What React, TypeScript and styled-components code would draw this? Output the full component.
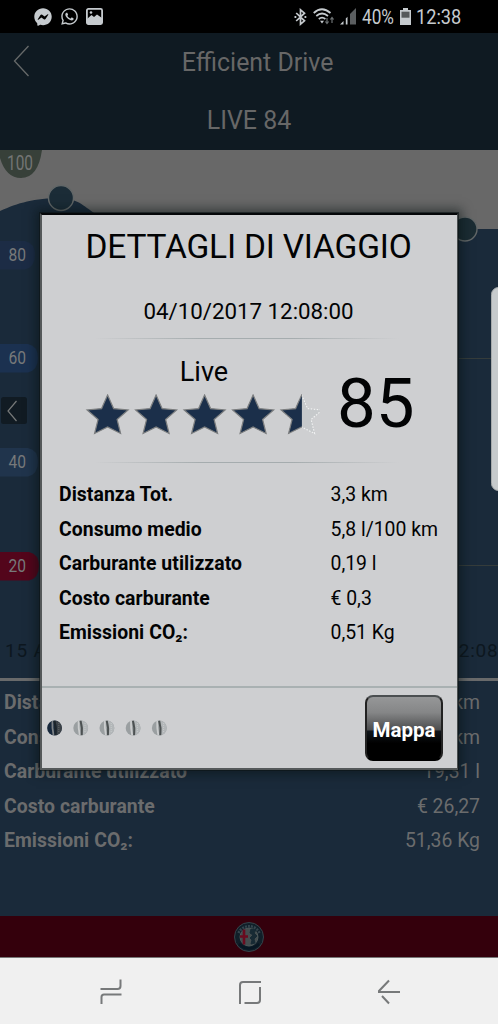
import React from "react";
import styled, { createGlobalStyle } from "styled-components";
import { FaFacebookMessenger, FaWhatsapp } from "react-icons/fa";

const GlobalStyle = createGlobalStyle`
  *, *::before, *::after { box-sizing: border-box; }
  body { margin: 0; background: #000; font-family: Roboto, "Liberation Sans", sans-serif; }
`;

const Phone = styled.div`
  position: relative;
  display: flex;
  flex-direction: column;
  width: 498px;
  height: 1024px;
  overflow: hidden;
`;

const StatusBar = styled.div`
  display: flex;
  justify-content: space-between;
  align-items: center;
  flex: none;
  height: 33px;
  padding: 0 37px 0 34px;
  background: #000;
  color: #c6cbcf;
`;

const IconGroup = styled.div<{ $gap: number }>`
  display: flex;
  align-items: center;
  gap: ${(p) => p.$gap}px;
  svg { display: block; flex: none; }
`;

const StatusText = styled.span<{ $width: number; $scale: number }>`
  width: ${(p) => p.$width}px;
  white-space: nowrap;
  font-size: 20px;
  line-height: 34px;
  transform: scaleX(${(p) => p.$scale});
  transform-origin: left center;
`;

const Header = styled.header`
  display: grid;
  grid-template-rows: 57px 60px;
  flex: none;
  height: 117px;
  background: #0f1a22;
  color: #676767;
`;

const HeaderRow = styled.div`
  display: grid;
  grid-template-columns: 50px 1fr 50px;
  align-items: center;
  padding-top: 2px;
  svg { display: block; margin: 0 0 3px 13px; }
`;

const HeaderTitle = styled.h1<{ $shift?: number }>`
  margin: 0;
  padding-left: ${(p) => p.$shift ?? 0}px;
  font-size: 24.9px;
  font-weight: 400;
  line-height: 54px;
  text-align: center;
  white-space: nowrap;
`;

const ChartArea = styled.div`
  flex: none;
  height: 528px;
  background: #686868;
  svg { display: block; }
`;

const Totals = styled.section`
  flex: 1;
  padding: 5px 18px 0 4px;
  border-top: 3px solid #696a6b;
  background: #1a2a3a;
  color: #6b6c6d;
`;

const TotalRow = styled.div`
  display: flex;
  justify-content: space-between;
  height: 34.6px;
  font-size: 19.4px;
  line-height: 34px;
  white-space: nowrap;
`;

const Label = styled.span`
  font-weight: 700;
  letter-spacing: 0.05px;
`;

const BrandBar = styled.footer`
  display: flex;
  align-items: center;
  justify-content: center;
  flex: none;
  height: 42px;
  background: #34000c;
  border-bottom: 1px solid #777;
  svg { display: block; }
`;

const NavBar = styled.nav`
  display: flex;
  align-items: center;
  justify-content: space-between;
  flex: none;
  height: 66px;
  padding: 2px 97px 0 99px;
  background: #f0f0f0;
  svg { display: block; }
`;

const EdgeHandle = styled.div`
  position: absolute;
  top: 287px;
  right: -8px;
  width: 15px;
  height: 204px;
  border: 1px solid #a6aaab;
  border-radius: 8px;
  background: #c6cacc;
`;

const Dialog = styled.div`
  position: absolute;
  top: 213px;
  left: 40px;
  display: flex;
  flex-direction: column;
  width: 418px;
  height: 557px;
  border: 2px solid #050709;
  border-color: #050709 #4a4f50 #55595a #55595a;
  border-right-width: 1px;
  background: #cecfd1;
  color: #020304;
  box-shadow: 0 0 0 1px rgba(12, 20, 22, 0.6), 0 0 10px 4px rgba(5, 15, 15, 0.5);
`;

const DialogTitle = styled.h2`
  margin: 0;
  padding-right: 2px;
  font-size: 33.5px;
  font-weight: 400;
  letter-spacing: -0.2px;
  line-height: 64px;
  text-align: center;
  white-space: nowrap;
`;

const DateLine = styled.div`
  height: 59px;
  padding-top: 9px;
  padding-right: 2px;
  font-size: 22.3px;
  line-height: 46px;
  text-align: center;
`;

const Rule = styled.div`
  flex: none;
  height: 1px;
  margin: 0 58px 0 52px;
  background: linear-gradient(90deg, transparent, #a5acae 35%, #a5acae 65%, transparent);
`;

const ScoreBlock = styled.div`
  display: flex;
  height: 123px;
  padding-left: 42px;
`;

const Rating = styled.div`
  width: 240px;
  padding-top: 16px;
  svg { display: block; margin-top: 5px; }
`;

const RatingName = styled.div`
  font-size: 27px;
  line-height: 34px;
  text-align: center;
`;

const Score = styled.div`
  padding: 25px 0 0 13px;
  font-size: 69px;
  line-height: 80px;
`;

const Details = styled.div`
  flex: 1;
  padding: 15px 17px 0 17px;
`;

const DetailRow = styled.div`
  display: grid;
  grid-template-columns: 271.5px 1fr;
  height: 34.6px;
  font-size: 19.4px;
  line-height: 34px;
  white-space: nowrap;
`;

const DialogFooter = styled.div`
  display: flex;
  align-items: center;
  justify-content: space-between;
  flex: none;
  height: 82px;
  padding: 0 14px 0 4px;
  border-top: 2px solid #a9b1b2;
  svg { display: block; }
`;

const MapButton = styled.button`
  width: 78px;
  height: 66px;
  padding: 3px 0 0;
  border: 2px solid #4b4f51;
  border-color: #4b4f51 #222 #000 #222;
  border-radius: 8px;
  background: linear-gradient(180deg, #969798 0%, #858687 25%, #4c4d4e 53%, #10151a 55%, #000 75%);
  color: #fff;
  font: 700 20.5px Roboto, sans-serif;
  white-space: nowrap;
`;

const co2 = "Emissioni CO₂:";

const trip = [
  ["Distanza Tot.", "3,3 km"],
  ["Consumo medio", "5,8 l/100 km"],
  ["Carburante utilizzato", "0,19 l"],
  ["Costo carburante", "€ 0,3"],
  [co2, "0,51 Kg"],
];

const totals = [
  ["Distanza Tot.", "351,9 km"],
  ["Consumo medio", "5,5 l/100 km"],
  ["Carburante utilizzato", "19,31 l"],
  ["Costo carburante", "€ 26,27"],
  [co2, "51,36 Kg"],
];

const STAR = "M21 0 L27 13.6 L41.5 15 L30.5 24.5 L34 38.5 L21 32 L8 38.5 L11.5 24.5 L0.5 15 L15 13.6 Z";

const Stars = () => (
  <svg width="236" height="42" viewBox="0 0 236 42">
    <defs>
      <clipPath id="half"><rect x="-2" y="-2" width="23.3" height="44" /></clipPath>
    </defs>
    <g transform="translate(2.6 1)">
      {[0, 1, 2, 3].map((i) => (
        <path key={i} d={STAR} transform={`translate(${i * 48.5} 0)`} fill="#1b2f4a" stroke="#7c7e7f" strokeWidth="1.2" />
      ))}
      <g transform="translate(194 0)">
        <path d={STAR} fill="#c6c9cb" stroke="#f2f3f3" strokeWidth="1.1" strokeDasharray="1.5 1.5" />
        <path d={STAR} fill="#1b2f4a" stroke="#7c7e7f" strokeWidth="1.2" clipPath="url(#half)" />
      </g>
    </g>
  </svg>
);

const PageDots = () => (
  <svg width="124" height="18" viewBox="0 0 124 18">
    <defs>
      <clipPath id="disc"><circle cx="8.5" cy="9" r="7.4" /></clipPath>
    </defs>
    {[0, 1, 2, 3, 4].map((i) => (
      <g key={i} transform={`translate(${i * 26.2} 0)`} clipPath="url(#disc)">
        <rect width="17" height="18" fill={i ? "#9a9fa1" : "#18293d"} />
        <path d="M9 1 H17 V17 H10 Q12 9 9 1" fill={i ? "#b3b7b9" : "#3c4247"} />
        <path d="M6.400 1.5 Q6 9 7.600 16.5" stroke={i ? "#cbcdce" : "#7c8185"} strokeWidth="1.8" fill="none" />
        <path d="M8.300 1.5 Q10.500 9 9.500 16.5" stroke={i ? "#4c5152" : "#1c2429"} strokeWidth="2" fill="none" />
        <path d="M12.8 4 V14" stroke={i ? "#c7cbcc" : "#62686c"} strokeWidth="1" strokeDasharray="1 1" />
      </g>
    ))}
  </svg>
);

const ticks = [
  { value: 80, y: 91, fill: "#1c2c45", w: 35 },
  { value: 60, y: 194, fill: "#1b3150", w: 38 },
  { value: 40, y: 298, fill: "#20344c", w: 38 },
  { value: 20, y: 402, fill: "#53051b", w: 39 },
];

const Chart = () => (
  <svg width="498" height="528" viewBox="0 0 498 528" fontFamily="Roboto, sans-serif">
    <path d="M0 61 C18 53 34 48 61 48 C82 49 86 60 100 66 C210 120 390 79 465 79 H498 V528 H0 Z" fill="#1a2a3a" />
    <path d="M459 208.5 H491 M459 415.5 H498" stroke="#353c3b" strokeWidth="1" />
    <path d="M0 0 H42 Q38 28 21 28 Q6 28 0 8 Z" fill="#374039" />
    <text x="7" y="20" fontSize="19.5" fill="#737574" textLength="26" lengthAdjust="spacingAndGlyphs">100</text>
    {ticks.map((t) => (
      <g key={t.value}>
        <path d={`M0 ${t.y} H${t.w - 10} Q${t.w} ${t.y + 2} ${t.w} ${t.y + 14} Q${t.w} ${t.y + 26} ${t.w - 10} ${t.y + 28.5} H0 Z`} fill={t.fill} />
        <text x="8.5" y={t.y + 20} fontSize="18" fill="#77797a" textLength="17.5" lengthAdjust="spacingAndGlyphs">{t.value}</text>
      </g>
    ))}
    <rect x="1" y="247" width="26" height="27" rx="2.5" fill="#111b23" />
    <path d="M16.5 251 L8 261 L16.5 271" fill="none" stroke="#777979" strokeWidth="1.2" />
    <circle cx="61" cy="48" r="12.5" fill="#1b2c37" stroke="#626768" strokeWidth="1.4" />
    <circle cx="465" cy="79" r="12" fill="#1b2c33" stroke="#626768" strokeWidth="1.4" />
    <g fontSize="19" fill="#0d171f" letterSpacing="0.8">
      <text x="5" y="506.500">15 Ago</text>
      <text x="498.500" y="506.500" textAnchor="end">12:08</text>
    </g>
  </svg>
);

const GalleryIcon = () => (
  <svg width="17" height="17" viewBox="0 0 17 17">
    <rect x="0.9" y="0.9" width="15.200" height="15.200" rx="1.5" fill="none" stroke="currentColor" strokeWidth="1.8" />
    <path d="M1 11 L5.500 7 L8 9 L11 6.500 L16 10 V16 H1 Z" fill="currentColor" />
    <circle cx="5" cy="4.500" r="1.300" fill="currentColor" />
  </svg>
);

const BluetoothIcon = () => (
  <svg width="14" height="18" viewBox="0 0 14 18" fill="none" stroke="currentColor" strokeWidth="1.700">
    <path d="M2.200 5 L10.500 12.800 L6.500 16.200 V1.800 L10.500 5.200 L2.200 13" />
    <path d="M0.500 9 H2.300 M10.500 9 H12.300" strokeWidth="1.900" />
  </svg>
);

const WifiIcon = () => (
  <svg width="22" height="17" viewBox="0 0 22 17" fill="none" stroke="currentColor" strokeWidth="1.700">
    <path d="M0.700 5 Q9 -2.500 17.500 5" />
    <path d="M3.300 8 Q9 3 15 8" />
    <path d="M5.800 11 Q9 8.400 12.400 11" />
    <path d="M7 12.800 H11 L9 15.500 Z" fill="currentColor" stroke="none" />
    <path d="M14 10 V15.500 M12.400 13.500 L14 15.500 L15.600 13.500 M19 15 V9.500 M17.400 11.500 L19 9.500 L20.600 11.500" stroke="#6c7173" strokeWidth="1.200" />
  </svg>
);

const SignalIcon = () => (
  <svg width="17" height="17" viewBox="0 0 17 17">
    <path d="M0 16.500 L3.500 13 V16.500 Z M5.800 16.500 V10.500 L7.500 8.800 V16.500 Z" fill="currentColor" />
    <path d="M10 16.500 V6 L16 0 V16.500 Z" fill="#5b5e60" />
  </svg>
);

const BatteryIcon = () => (
  <svg width="11" height="17" viewBox="0 0 11 17">
    <path d="M3 0 H8 V2 H11 V17 H0 V2 H3 Z" fill="currentColor" />
    <rect x="1.500" y="3.700" width="8" height="6" fill="#55595b" />
  </svg>
);

const BrandBadge = () => (
  <svg width="30" height="30" viewBox="0 0 30 30">
    <circle cx="15" cy="15" r="14.500" fill="#101f29" stroke="#37434a" strokeWidth="1" />
    <path d="M4.500 11 A11.500 11.500 0 0 1 25.500 11" fill="none" stroke="#34444d" strokeWidth="2.500" strokeDasharray="2 1" />
    <circle cx="15" cy="15" r="9" fill="#444d4f" stroke="#566060" strokeWidth="0.800" />
    <path d="M10 7.500 V22.500 M6 14.500 H14" stroke="#690b1f" strokeWidth="2.600" />
    <path d="M17 7 L22 8 L20 11 L23 14 L20 17 L21 21 L17 22 L18 18 L16 16 L19 13 L16 11 Z" fill="#172a34" stroke="#172a34" />
    <path d="M5 22 Q15 31 25 22" fill="none" stroke="#071622" strokeWidth="2.500" />
  </svg>
);

const NavIcons = () => (
  <>
    <svg width="24" height="26" viewBox="0 0 24 26" fill="none" stroke="#77797a" strokeWidth="2">
      <path d="M1.500 10 H18.500 Q21.500 10 21.500 7 V0.500 M2.500 25 V18 Q2.500 15.500 5 15.500 H22.500" />
    </svg>
    <svg width="24" height="25" viewBox="0 0 24 25" fill="none" stroke="#77797a" strokeWidth="2">
      <path d="M2 24 V5 Q2 2 5 2 H23 M22 7 V20 Q22 23 19 23 H6.500" />
    </svg>
    <svg width="24" height="26" viewBox="0 0 24 26" fill="none" stroke="#77797a" strokeWidth="2">
      <path d="M12 1.500 L2 12 V13 H23 M5 17 L12 24.500" />
    </svg>
  </>
);

export default function App() {
  return (
    <Phone>
      <GlobalStyle />
      <StatusBar>
        <IconGroup $gap={7.5}>
          <FaFacebookMessenger size={18} />
          <FaWhatsapp size={19} />
          <GalleryIcon />
        </IconGroup>
        <IconGroup $gap={5}>
          <BluetoothIcon />
          <WifiIcon />
          <SignalIcon />
          <StatusText $width={33} $scale={0.86}>40%</StatusText>
          <BatteryIcon />
          <StatusText $width={45} $scale={0.91}>12:38</StatusText>
        </IconGroup>
      </StatusBar>
      <Header>
        <HeaderRow>
          <svg width="17" height="32" viewBox="0 0 17 32"><path d="M15.500 1 L1.500 16 L15.500 31" fill="none" stroke="#676a6a" strokeWidth="1.300" /></svg>
          <HeaderTitle $shift={17}>Efficient Drive</HeaderTitle>
        </HeaderRow>
        <HeaderRow>
          <span />
          <HeaderTitle>LIVE 84</HeaderTitle>
        </HeaderRow>
      </Header>
      <ChartArea><Chart /></ChartArea>
      <Totals>
        {totals.map(([name, value]) => (
          <TotalRow key={name}><Label>{name}</Label><span>{value}</span></TotalRow>
        ))}
      </Totals>
      <BrandBar><BrandBadge /></BrandBar>
      <NavBar><NavIcons /></NavBar>
      <EdgeHandle />
      <Dialog role="dialog">
        <DialogTitle>DETTAGLI DI VIAGGIO</DialogTitle>
        <DateLine>04/10/2017 12:08:00</DateLine>
        <Rule />
        <ScoreBlock>
          <Rating>
            <RatingName>Live</RatingName>
            <Stars />
          </Rating>
          <Score>85</Score>
        </ScoreBlock>
        <Rule />
        <Details>
          {trip.map(([name, value]) => (
            <DetailRow key={name}><Label>{name}</Label><span>{value}</span></DetailRow>
          ))}
        </Details>
        <DialogFooter>
          <PageDots />
          <MapButton>Mappa</MapButton>
        </DialogFooter>
      </Dialog>
    </Phone>
  );
}
